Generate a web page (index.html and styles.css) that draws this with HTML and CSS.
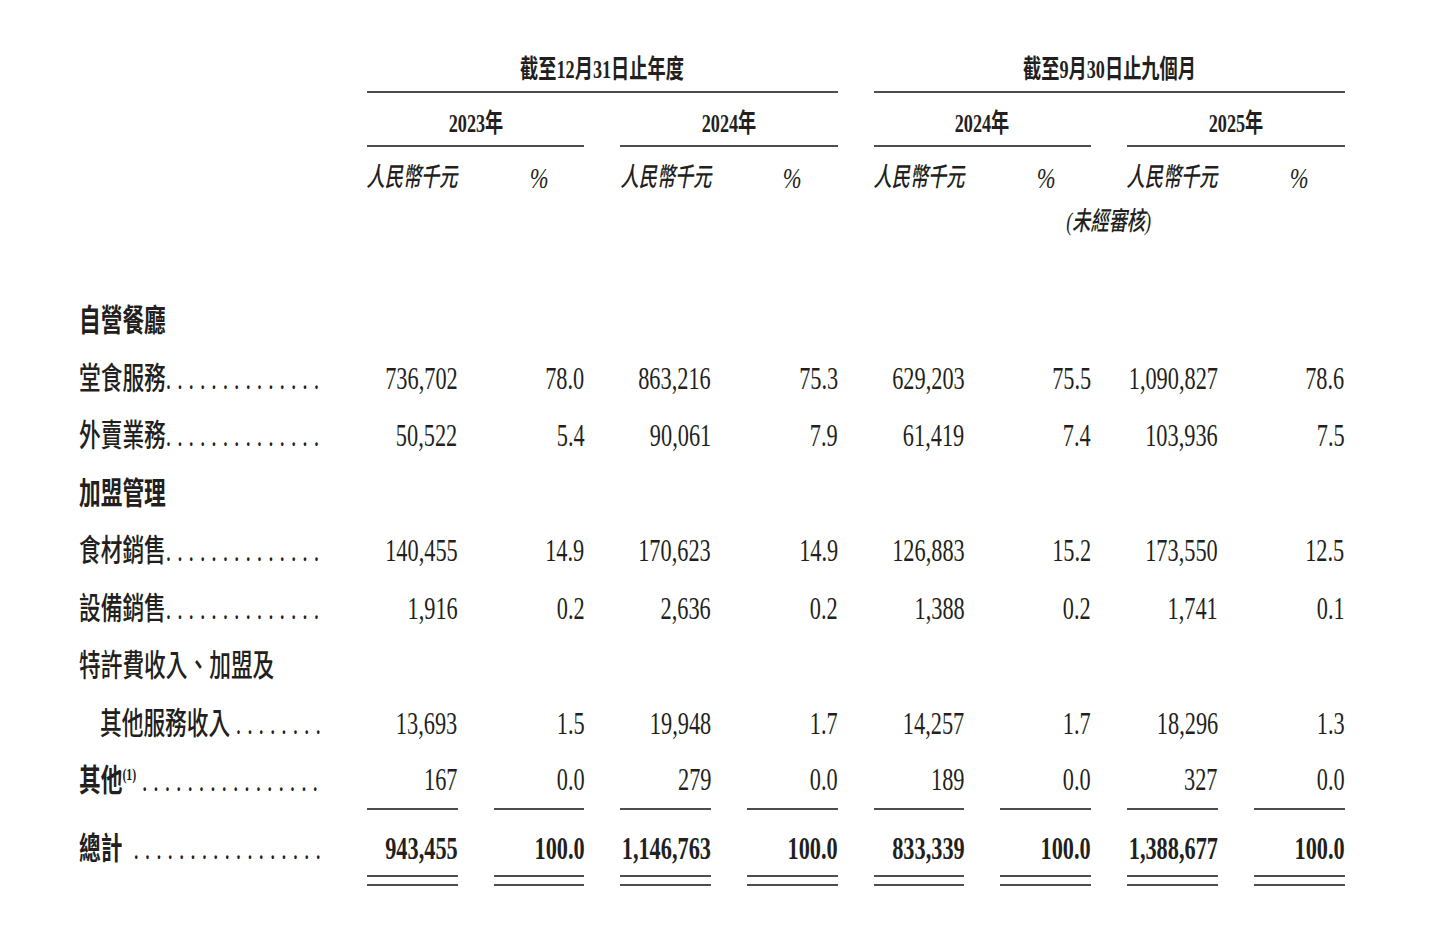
FILE: index.html
```html
<!DOCTYPE html>
<html lang="zh-Hant">
<head>
<meta charset="utf-8">
<title>收入明細</title>
<link rel="stylesheet" href="styles.css">
</head>
<body>
<div class="sheet">
  <div class="row hr1">
    <div class="c"></div>
    <div class="c m grp"><span class="t">截至12月31日止年度</span></div>
    <div class="c m grp"><span class="t">截至9月30日止九個月</span></div>
  </div>
  <div class="row hr2">
    <div class="c"></div>
    <div class="c m yr"><span class="t">2023年</span></div>
    <div class="c m yr"><span class="t">2024年</span></div>
    <div class="c m yr"><span class="t">2024年</span></div>
    <div class="c m yr"><span class="t">2025年</span></div>
  </div>
  <div class="row hr3">
    <div class="c"></div>
    <div class="c m u"><span class="t">人民幣千元</span></div>
    <div class="c m u pc"><span class="t">%</span></div>
    <div class="c m u"><span class="t">人民幣千元</span></div>
    <div class="c m u pc"><span class="t">%</span></div>
    <div class="c m u"><span class="t">人民幣千元</span></div>
    <div class="c m u pc"><span class="t">%</span></div>
    <div class="c m u"><span class="t">人民幣千元</span></div>
    <div class="c m u pc"><span class="t">%</span></div>
  </div>
  <div class="row hr4">
    <div class="c m u note"><span class="t">(未經審核)</span></div>
  </div>

  <div class="body">
    <div class="row br">
      <div class="c l lbl b"><span class="t">自營餐廳</span></div>
    </div>
    <div class="row br">
      <div class="c l lbl"><span class="t">堂食服務<span class="dots">..............</span></span></div>
      <div class="c r n"><span class="t">736,702</span></div>
      <div class="c r n"><span class="t">78.0</span></div>
      <div class="c r n"><span class="t">863,216</span></div>
      <div class="c r n"><span class="t">75.3</span></div>
      <div class="c r n"><span class="t">629,203</span></div>
      <div class="c r n"><span class="t">75.5</span></div>
      <div class="c r n"><span class="t">1,090,827</span></div>
      <div class="c r n"><span class="t">78.6</span></div>
    </div>
    <div class="row br">
      <div class="c l lbl"><span class="t">外賣業務<span class="dots">..............</span></span></div>
      <div class="c r n"><span class="t">50,522</span></div>
      <div class="c r n"><span class="t">5.4</span></div>
      <div class="c r n"><span class="t">90,061</span></div>
      <div class="c r n"><span class="t">7.9</span></div>
      <div class="c r n"><span class="t">61,419</span></div>
      <div class="c r n"><span class="t">7.4</span></div>
      <div class="c r n"><span class="t">103,936</span></div>
      <div class="c r n"><span class="t">7.5</span></div>
    </div>
    <div class="row br">
      <div class="c l lbl b"><span class="t">加盟管理</span></div>
    </div>
    <div class="row br">
      <div class="c l lbl"><span class="t">食材銷售<span class="dots">..............</span></span></div>
      <div class="c r n"><span class="t">140,455</span></div>
      <div class="c r n"><span class="t">14.9</span></div>
      <div class="c r n"><span class="t">170,623</span></div>
      <div class="c r n"><span class="t">14.9</span></div>
      <div class="c r n"><span class="t">126,883</span></div>
      <div class="c r n"><span class="t">15.2</span></div>
      <div class="c r n"><span class="t">173,550</span></div>
      <div class="c r n"><span class="t">12.5</span></div>
    </div>
    <div class="row br">
      <div class="c l lbl"><span class="t">設備銷售<span class="dots">..............</span></span></div>
      <div class="c r n"><span class="t">1,916</span></div>
      <div class="c r n"><span class="t">0.2</span></div>
      <div class="c r n"><span class="t">2,636</span></div>
      <div class="c r n"><span class="t">0.2</span></div>
      <div class="c r n"><span class="t">1,388</span></div>
      <div class="c r n"><span class="t">0.2</span></div>
      <div class="c r n"><span class="t">1,741</span></div>
      <div class="c r n"><span class="t">0.1</span></div>
    </div>
    <div class="row br">
      <div class="c l lbl"><span class="t">特許費收入、加盟及</span></div>
    </div>
    <div class="row br">
      <div class="c l lbl ind"><span class="t">其他服務收入<span class="dots gap">........</span></span></div>
      <div class="c r n"><span class="t">13,693</span></div>
      <div class="c r n"><span class="t">1.5</span></div>
      <div class="c r n"><span class="t">19,948</span></div>
      <div class="c r n"><span class="t">1.7</span></div>
      <div class="c r n"><span class="t">14,257</span></div>
      <div class="c r n"><span class="t">1.7</span></div>
      <div class="c r n"><span class="t">18,296</span></div>
      <div class="c r n"><span class="t">1.3</span></div>
    </div>
    <div class="row br">
      <div class="c l lbl b"><span class="t">其他<sup class="fn">(1)</sup><span class="dots gap">................</span></span></div>
      <div class="c r n ul"><span class="t">167</span></div>
      <div class="c r n ul"><span class="t">0.0</span></div>
      <div class="c r n ul"><span class="t">279</span></div>
      <div class="c r n ul"><span class="t">0.0</span></div>
      <div class="c r n ul"><span class="t">189</span></div>
      <div class="c r n ul"><span class="t">0.0</span></div>
      <div class="c r n ul"><span class="t">327</span></div>
      <div class="c r n ul"><span class="t">0.0</span></div>
    </div>
    <div class="row tr">
      <div class="c l lbl b tot"><span class="t">總計 <span class="dots gap">.................</span></span></div>
      <div class="c r n b tot dul"><span class="t">943,455</span></div>
      <div class="c r n b tot dul"><span class="t">100.0</span></div>
      <div class="c r n b tot dul"><span class="t">1,146,763</span></div>
      <div class="c r n b tot dul"><span class="t">100.0</span></div>
      <div class="c r n b tot dul"><span class="t">833,339</span></div>
      <div class="c r n b tot dul"><span class="t">100.0</span></div>
      <div class="c r n b tot dul"><span class="t">1,388,677</span></div>
      <div class="c r n b tot dul"><span class="t">100.0</span></div>
    </div>
  </div>
</div>
</body>
</html>
```

FILE: styles.css
```css
* { box-sizing: border-box; }

html, body {
  margin: 0;
  padding: 0;
  background: #ffffff;
}

body {
  color: #231f20;
  font-family: "Liberation Serif", "Noto Sans CJK TC", serif;
}

.sheet {
  padding-left: 79px;
  width: 1439px;
}

.row {
  display: grid;
  grid-template-columns: 252px repeat(8, 90.7px);
  column-gap: 36px;
}

.c {
  display: flex;
  align-items: center;
  min-width: 0;
}

.l { justify-content: flex-start; }
.m { justify-content: center; }
.r { justify-content: flex-end; }

.t {
  display: inline-block;
  white-space: nowrap;
  line-height: 1;
}

.l .t { transform-origin: left center; }
.m .t { transform-origin: center center; }
.r .t { transform-origin: right center; }

/* header */
.hr1 { height: 93px; }
.hr2 { height: 54px; }
.hr3 { height: 62px; }
.hr4 { height: 26px; }

.grp {
  grid-column: span 4;
  padding-top: 49px;
  border-bottom: 2px solid #4d4d4d;
}

.yr {
  grid-column: span 2;
  padding-top: 10px;
  border-bottom: 2px solid #4d4d4d;
}

.grp .t,
.yr .t {
  font-size: 26px;
  font-weight: 700;
  transform: scaleX(0.7);
}

.u .t {
  font-size: 26px;
  font-style: italic;
  font-weight: 500;
  transform: scaleX(0.7);
}

.pc .t {
  font-size: 29px;
  font-weight: 400;
  transform: scaleX(0.78);
}

.note { grid-column: 6 / span 4; }

/* body */
.body { margin-top: 57px; }

.br { height: 57.5px; }
.tr { height: 76px; }

.lbl .t {
  font-size: 31px;
  font-weight: 500;
  transform: scaleX(0.7);
}

.n .t {
  font-size: 31px;
  transform: scaleX(0.72);
}

.b .t,
.lbl.b .t { font-weight: 700; }

.ind { padding-left: 21px; }

.dots {
  font-weight: 400;
  letter-spacing: 8.5px;
}

.dots.gap { margin-left: 8px; }

.fn {
  font-size: 17px;
  font-weight: 700;
  vertical-align: 11px;
  line-height: 0;
}

.ul { border-bottom: 2px solid #4d4d4d; }

.tot { padding-top: 2px; }

.dul {
  background-image:
    linear-gradient(#4d4d4d, #4d4d4d),
    linear-gradient(#4d4d4d, #4d4d4d);
  background-repeat: no-repeat;
  background-size: 100% 2px, 100% 2px;
  background-position: left 0 bottom 0, left 0 bottom 9px;
}
```
